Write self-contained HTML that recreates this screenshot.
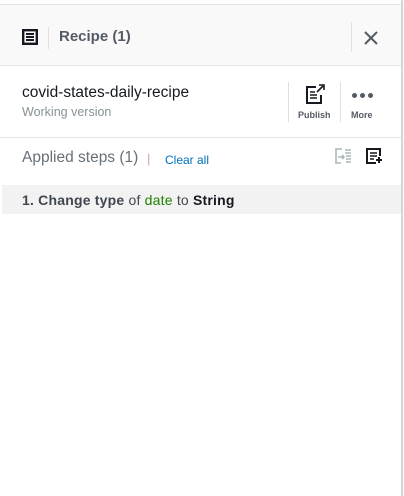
<!DOCTYPE html>
<html><head><meta charset="utf-8"><style>
*{margin:0;padding:0;box-sizing:border-box}
body{width:404px;height:496px;background:#fff;font-family:"Liberation Sans",sans-serif;position:relative;overflow:hidden}
.abs{position:absolute}
</style></head><body>
<div class="abs" style="left:0;top:4px;width:401px;height:62px;background:#f9f9f9;border-top:1px solid #e6e6e6;border-bottom:1px solid #e6e6e6"></div>
<div class="abs" style="left:401px;top:0;width:2px;height:496px;background:#d5d5d5"></div>
<svg class="abs" style="left:22px;top:29px" width="16" height="16" viewBox="0 0 16 16"><rect x="1.2" y="1.2" width="13.6" height="13.6" fill="none" stroke="#16191f" stroke-width="2.4"/><path d="M4 5h8M4 8h8M4 11h8" stroke="#16191f" stroke-width="2"/></svg>
<div class="abs" style="left:48px;top:27px;width:1px;height:22px;background:#e0e0e0"></div>
<div class="abs" style="left:59px;top:28px;font-size:15px;font-weight:bold;color:#545b64">Recipe (1)</div>
<div class="abs" style="left:351px;top:22px;width:1px;height:30px;background:#e0e0e0"></div>
<svg class="abs" style="left:364px;top:31px" width="14" height="14" viewBox="0 0 14 14"><path d="M1 1L13 13M13 1L1 13" stroke="#545b64" stroke-width="2"/></svg>
<div class="abs" style="left:22px;top:84px;font-size:15.5px;color:#16191f">covid-states-daily-recipe</div>
<div class="abs" style="left:22px;top:105px;font-size:12.5px;color:#879196">Working version</div>
<div class="abs" style="left:288px;top:82px;width:1px;height:40px;background:#e0e0e0"></div>
<div class="abs" style="left:340px;top:82px;width:1px;height:40px;background:#e0e0e0"></div>
<svg class="abs" style="left:305px;top:84px" width="20" height="20" viewBox="0 0 20 20"><path d="M11 3H2v16h14v-8" fill="none" stroke="#16191f" stroke-width="2"/><path d="M5 8h5M5 11h7M5 14h7" stroke="#16191f" stroke-width="1.5"/><path d="M12 8L18 2M14 1h5v5" fill="none" stroke="#16191f" stroke-width="1.6"/></svg>
<div class="abs" style="left:298px;top:110px;font-size:9px;font-weight:bold;color:#545b64">Publish</div>
<div class="abs" style="left:352px;top:93px;width:5px;height:5px;border-radius:50%;background:#545b64;box-shadow:8px 0 0 #545b64,16px 0 0 #545b64"></div>
<div class="abs" style="left:351px;top:110px;font-size:9px;font-weight:bold;color:#545b64">More</div>
<div class="abs" style="left:0;top:137px;width:401px;height:1px;background:#e6e6e6"></div>
<div class="abs" style="left:22px;top:149px;font-size:15.5px;color:#687078">Applied steps (1)</div>
<div class="abs" style="left:147px;top:151px;font-size:13px;color:#d4a5a5">|</div>
<div class="abs" style="left:165px;top:153px;font-size:12px;color:#0073bb">Clear all</div>
<svg class="abs" style="left:335px;top:148px" width="17" height="16" viewBox="0 0 17 16"><path d="M7 1H1v14h5M3 9h6M7 7l2 2-2 2" fill="none" stroke="#aab7b8" stroke-width="1.6"/><path d="M10 2h6M10 5h6M11 8h5M11 11h5M11 14h5" stroke="#aab7b8" stroke-width="1.6"/></svg>
<svg class="abs" style="left:366px;top:148px" width="17" height="16" viewBox="0 0 17 16"><path d="M10 15H1V1h13v7" fill="none" stroke="#16191f" stroke-width="2"/><path d="M4 5h7M4 8h7M4 11h4" stroke="#16191f" stroke-width="1.5"/><path d="M13 9v6M10 12h6" stroke="#16191f" stroke-width="2"/></svg>
<div class="abs" style="left:2px;top:185px;width:399px;height:29px;background:#f2f2f2"></div>
<div class="abs" style="left:22px;top:192px;font-size:14px;color:#16191f;letter-spacing:0.2px"><b style="color:#414750">1. Change type</b> <span style="color:#414750">of</span> <span style="color:#1d8102">date</span> <span style="color:#414750">to</span> <b>String</b></div>
</body></html>
